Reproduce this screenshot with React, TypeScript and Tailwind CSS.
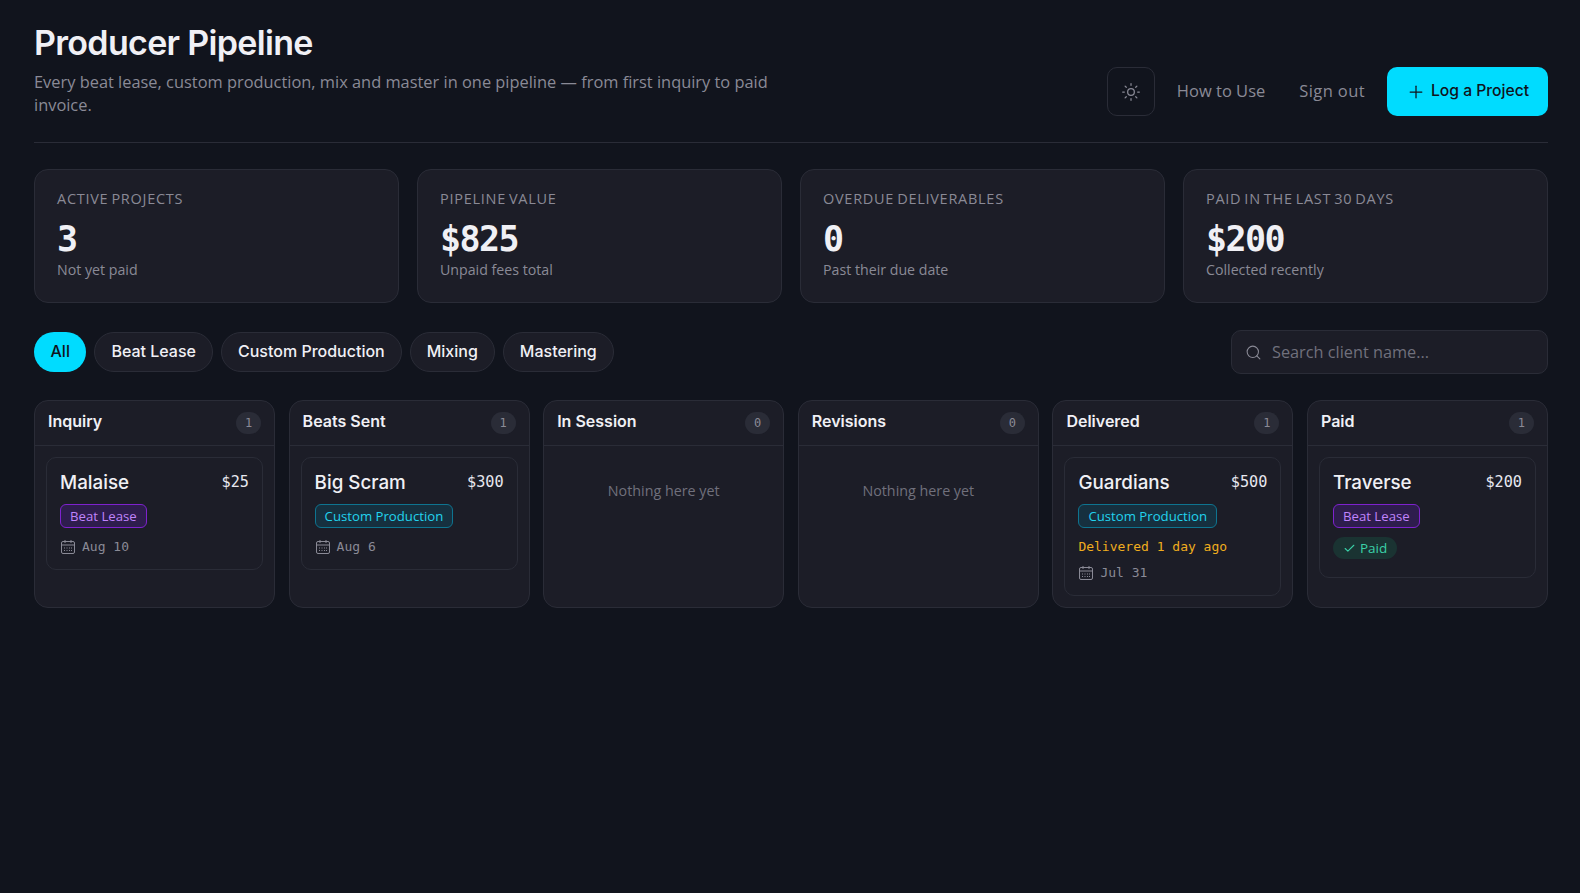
import { Check, Plus, Search, Sun } from "lucide-react";

type CardType = {
  title: string;
  price: string;
  tag: "beat" | "custom";
  date?: string;
  delivered?: string;
  paid?: boolean;
};

type ColumnType = {
  name: string;
  cards: CardType[];
};

const heading = "font-['Inter','Open_Sans',sans-serif]";
const mono = "font-['DejaVu_Sans_Mono','Liberation_Mono',monospace]";

const stats = [
  { label: "ACTIVE PROJECTS", value: "3", note: "Not yet paid" },
  { label: "PIPELINE VALUE", value: "$825", note: "Unpaid fees total" },
  { label: "OVERDUE DELIVERABLES", value: "0", note: "Past their due date" },
  { label: "PAID IN THE LAST 30 DAYS", value: "$200", note: "Collected recently" },
];

const filters = ["Beat Lease", "Custom Production", "Mixing", "Mastering"];

const columns: ColumnType[] = [
  { name: "Inquiry", cards: [{ title: "Malaise", price: "$25", tag: "beat", date: "Aug 10" }] },
  { name: "Beats Sent", cards: [{ title: "Big Scram", price: "$300", tag: "custom", date: "Aug 6" }] },
  { name: "In Session", cards: [] },
  { name: "Revisions", cards: [] },
  {
    name: "Delivered",
    cards: [{ title: "Guardians", price: "$500", tag: "custom", delivered: "Delivered 1 day ago", date: "Jul 31" }],
  },
  { name: "Paid", cards: [{ title: "Traverse", price: "$200", tag: "beat", paid: true }] },
];

// calendar with a grid of day dots
const CalendarIcon = () => (
  <svg width="16" height="16" viewBox="0 0 16 16" fill="none" stroke="currentColor" strokeWidth="1" className="shrink-0">
    <rect x="1.5" y="2.5" width="13" height="12" rx="1.5" />
    <path d="M1.5 6h13M5 1v3M11 1v3" />
    <path d="M4 9h1M6.5 9h1M9 9h1M11 9h1M4 11.5h1M6.5 11.5h1M9 11.5h1M11 11.5h1" />
  </svg>
);

const Tag = ({ tag }: { tag: CardType["tag"] }) =>
  tag === "beat" ? (
    <span className="rounded-md border border-[#7e22ce] bg-[#2e1d4d] px-[9px] py-[1px] text-[13.2px] leading-[20px] text-[#c084fc]">
      Beat Lease
    </span>
  ) : (
    <span className="rounded-md border border-[#0e7490] bg-[#16303f] px-[9px] py-[1px] text-[13.2px] leading-[20px] text-[#22d3ee]">
      Custom Production
    </span>
  );

const ProjectCard = ({ card }: { card: CardType }) => (
  <div className="rounded-[10px] border border-[#2a2c37] bg-[#1c1d27] px-[13px] pt-[11px] pb-[13px]">
    <div className="flex items-center justify-between">
      <span className={`${heading} text-[18.8px] leading-[27px] font-medium text-[#f0f0f5]`}>{card.title}</span>
      <span className={`${mono} text-[15.2px] font-medium text-[#e8e8f0]`}>{card.price}</span>
    </div>
    <div className="mt-[8px] flex">
      <Tag tag={card.tag} />
    </div>
    {card.delivered && (
      <div className={`${mono} mt-[9px] text-[13px] leading-[19px] text-[#f0ad1e]`}>{card.delivered}</div>
    )}
    {card.date && (
      <div className={`${mono} ${card.delivered ? "mt-[7px]" : "mt-[9px]"} flex items-center gap-[6px] text-[13px] leading-[19px] text-[#8a8a96]`}>
        <CalendarIcon />
        {card.date}
      </div>
    )}
    {card.paid && (
      <div className="mt-[9px] mb-[5px] flex">
        <span className="flex items-center gap-[4px] rounded-full bg-[#1a3332] px-[10px] py-[2px] text-[13.5px] leading-[18px] font-medium text-[#3ad0a8]">
          <Check size={13} />
          Paid
        </span>
      </div>
    )}
  </div>
);

export default function App() {
  return (
    <div className="min-h-[893px] bg-[#11141d] pt-[21px] pr-[32px] pl-[34px] font-['Open_Sans',sans-serif] text-[#f0f0f5]">
      <header className="flex items-end justify-between border-b border-[#2a2c37] pb-[26px]">
        <div>
          <h1 className={`${heading} text-[34px] leading-[44px] font-semibold tracking-[-0.02em] text-[#f0f0f5]`}>
            Producer Pipeline
          </h1>
          <p className="mt-[6px] max-w-[780px] text-[16.4px] leading-[22.5px] text-[#8a8a96]">
            Every beat lease, custom production, mix and master in one pipeline — from first inquiry to paid invoice.
          </p>
        </div>
        <div className="flex items-center gap-[10px]">
          <button className="flex h-[49px] w-[48px] items-center justify-center rounded-[10px] border border-[#2a2c37] text-[#8a8a96]">
            <Sun size={20} strokeWidth={1.5} />
          </button>
          <span className="px-[12px] text-[16.5px] text-[#8a8a96]">How to Use</span>
          <span className="px-[12px] text-[16.5px] tracking-[0.4px] text-[#8a8a96]">Sign out</span>
          <button className={`${heading} flex h-[49px] w-[161px] items-center justify-center gap-[5px] rounded-[10px] bg-[#00dcff] pb-[2px] text-[15.7px] font-medium text-[#10131c]`}>
            <Plus size={20} strokeWidth={1.5} className="mt-[3px]" />
            Log a Project
          </button>
        </div>
      </header>

      <section className="mt-[26px] grid grid-cols-4 gap-[18px]">
        {stats.map((stat) => (
          <div key={stat.label} className="h-[134px] rounded-[14px] border border-[#2a2c37] bg-[#1c1d27] px-[22px] pt-[19px]">
            <div className="text-[14.5px] leading-[20px] tracking-[0.05em] [word-spacing:-1.5px] text-[#8a8a96]">{stat.label}</div>
            <div className={`${mono} mt-[11px] text-[35px] leading-[38px] font-bold tracking-[-1.6px] text-[#f0f0f5]`}>{stat.value}</div>
            <div className="mt-[2px] text-[14.2px] leading-[20px] text-[#8a8a96]">{stat.note}</div>
          </div>
        ))}
      </section>

      <section className="mt-[27px] flex items-center justify-between">
        <div className={`${heading} flex gap-[8px] text-[16px] font-medium`}>
          <span className="flex h-[40px] items-center rounded-full bg-[#00dcff] px-[16.5px] pb-[2px] text-[#10131c]">All</span>
          {filters.map((filter) => (
            <span key={filter} className="flex h-[40px] items-center rounded-full border border-[#2a2c37] bg-[#1c1d27] px-[16px] pb-[2px] text-[#f0f0f5]">
              {filter}
            </span>
          ))}
        </div>
        <div className="flex h-[44px] w-[317px] items-center gap-[10px] rounded-[10px] border border-[#2a2c37] bg-[#1c1d27] px-[13px]">
          <Search size={17} strokeWidth={1.5} className="text-[#8a8a96]" />
          <span className="text-[16.3px] text-[#70707c]">Search client name...</span>
        </div>
      </section>

      <section className="mt-[26px] grid grid-cols-6 gap-[13.6px]">
        {columns.map((col) => (
          <div key={col.name} className="h-[208px] rounded-[14px] border border-[#2a2c37] bg-[#1c1d27]">
            <div className="flex h-[45px] items-center justify-between border-b border-[#2a2c37] px-[13px]">
              <span className={`${heading} pb-[5px] text-[16px] font-semibold text-[#f0f0f5]`}>{col.name}</span>
              <span className={`${mono} flex h-[22px] min-w-[25px] items-center justify-center rounded-full bg-[#2a2c37] text-[12px] text-[#8a8a96]`}>
                {col.cards.length}
              </span>
            </div>
            <div className="p-[11px]">
              {col.cards.map((card) => (
                <ProjectCard key={card.title} card={card} />
              ))}
              {col.cards.length === 0 && (
                <div className="pt-[24px] text-center text-[14.3px] leading-[20px] text-[#70707c]">Nothing here yet</div>
              )}
            </div>
          </div>
        ))}
      </section>
    </div>
  );
}
